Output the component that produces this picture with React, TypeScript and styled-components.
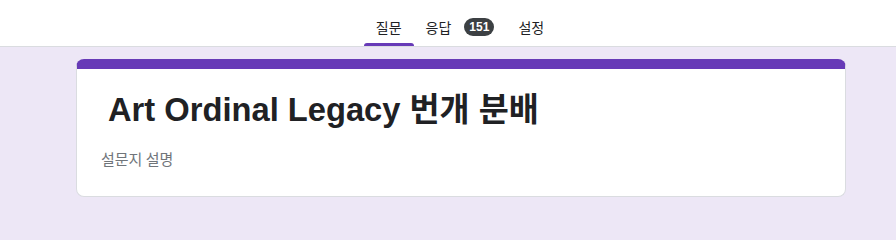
import React from "react";
import styled, { createGlobalStyle } from "styled-components";

const GlobalStyle = createGlobalStyle`
    html, body {
        margin: 0;
        padding: 0;
        background: #ede7f6;
        font-family: "Liberation Sans", "Noto Sans CJK KR", Arial, sans-serif;
    }
`;

const PageStyled = styled.div`
    min-height: 206px;
    display: flex;
    flex-direction: column;
`;

const HeaderStyled = styled.nav`
    height: 46px;
    background: #fff;
    border-bottom: 1px solid #dadce0;
    display: flex;
    justify-content: center;
    padding-left: 24px;
`;

const TabStyled = styled.div<{ $active?: boolean }>`
    position: relative;
    display: flex;
    align-items: center;
    padding: 8px 12px 0;
    font-family: "Noto Sans CJK KR", "Liberation Sans", sans-serif;
    font-size: 14px;
    color: #202124;
    cursor: pointer;

    &::after {
        content: "";
        display: ${(props) => (props.$active ? "block" : "none")};
        position: absolute;
        left: 0;
        right: 0;
        bottom: 0;
        height: 3px;
        border-radius: 3px 3px 0 0;
        background: #673ab7;
    }
`;

const BadgeStyled = styled.span`
    margin-left: 13px;
    height: 18px;
    min-width: 30px;
    padding: 0 5px;
    box-sizing: border-box;
    border-radius: 9px;
    background: #3c4043;
    color: #fff;
    font-family: "Liberation Sans", Arial, sans-serif;
    font-size: 12px;
    font-weight: 700;
    display: flex;
    align-items: center;
    justify-content: center;
`;

const ContentStyled = styled.main`
    display: flex;
    justify-content: center;
    padding: 12px 0 0 26px;
`;

const CardStyled = styled.section`
    width: 770px;
    box-sizing: border-box;
    background: #fff;
    border: 1px solid #dadce0;
    border-top: 10px solid #673ab7;
    border-radius: 8px;
    padding: 21px 24px 27px;
`;

const TitleStyled = styled.h1`
    margin: 0;
    padding-left: 7px;
    font-family: "Liberation Sans", "Noto Sans CJK KR", Arial, sans-serif;
    font-size: 32.7px;
    line-height: 40px;
    font-weight: 700;
    color: #202124;
`;

const DescriptionStyled = styled.p`
    margin: 19px 0 0;
    font-family: "Noto Sans CJK KR", "Liberation Sans", sans-serif;
    font-size: 15px;
    line-height: 20px;
    color: #70757a;
`;

export default function App() {
    return (
        <PageStyled>
            <GlobalStyle />
            <HeaderStyled>
                <TabStyled $active>질문</TabStyled>
                <TabStyled>
                    응답
                    <BadgeStyled>151</BadgeStyled>
                </TabStyled>
                <TabStyled>설정</TabStyled>
            </HeaderStyled>

            {/* Form header card */}
            <ContentStyled>
                <CardStyled>
                    <TitleStyled>Art Ordinal Legacy 번개 분배</TitleStyled>
                    <DescriptionStyled>설문지 설명</DescriptionStyled>
                </CardStyled>
            </ContentStyled>
        </PageStyled>
    );
}
